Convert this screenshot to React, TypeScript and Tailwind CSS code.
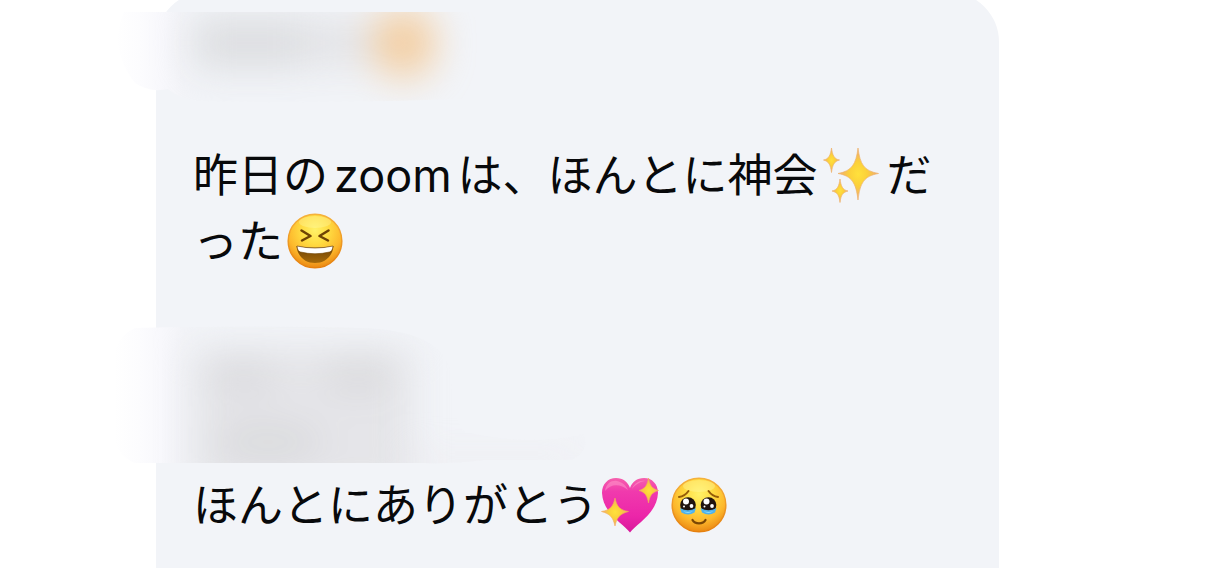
import React from "react";

const emojiClass = "inline-block size-14 align-[-11px]";

function FaceBase({ id }: { id: string }) {
  return (
    <>
      <defs>
        <radialGradient id={id} cx="0.5" cy="0.3" r="0.72">
          <stop offset="0" stopColor="#fff168" />
          <stop offset="0.35" stopColor="#ffdc42" />
          <stop offset="0.7" stopColor="#fdb82c" />
          <stop offset="1" stopColor="#e98410" />
        </radialGradient>
        <linearGradient id={id + "-rim"} x1="0" y1="0" x2="0" y2="1">
          <stop offset="0" stopColor="#f5b23c" />
          <stop offset="1" stopColor="#e6800e" />
        </linearGradient>
      </defs>
      <circle cx="28" cy="28" r="26.800" fill={"url(#" + id + ")"} stroke={"url(#" + id + "-rim)"} strokeWidth="1.5" />
      <ellipse cx="28" cy="9" rx="16" ry="6" fill="#fffbb0" opacity="0.35" />
    </>
  );
}

function LaughingFace() {
  return (
    <svg viewBox="0 0 56 56" role="img" aria-label="😆" className={emojiClass + " ml-1"}>
      <defs>
        <linearGradient id="laugh-mouth" x1="0" y1="0" x2="0" y2="1">
          <stop offset="0" stopColor="#6d4103" />
          <stop offset="1" stopColor="#a5690a" />
        </linearGradient>
      </defs>
      <FaceBase id="laugh-face" />
      <g fill="none" stroke="#6f4204" strokeWidth="2.5" strokeLinecap="round" strokeLinejoin="round">
        <path d="M14.5 17.5 L23.5 23 L15 27.5" />
        <path d="M41.5 17.5 L32.5 23 L41 27.5" />
      </g>
      <path d="M9.5 33 Q28 36.500 46.500 33 C45.500 43.500 38 50 28 50 C18 50 10.500 43.500 9.500 33Z" fill="url(#laugh-mouth)" />
      <path d="M10 33 Q28 37 46 33 C45.700 36.500 44.500 38.500 42.500 39 Q28 42.500 13.500 39 C11.500 38.500 10.300 36.500 10 33Z" fill="#fff" stroke="#6f4204" strokeWidth="0.6" />
    </svg>
  );
}

function TearfulFace() {
  return (
    <svg viewBox="0 0 56 56" role="img" aria-label="🥹" className={emojiClass + " ml-3"}>
      <FaceBase id="tear-face" />
      <g fill="none" stroke="#965c08" strokeWidth="2" strokeLinecap="round">
        <path d="M8 20 C12 19.500 15 17.500 17.500 14" />
        <path d="M47 20 C43 19.500 40 17.500 37.500 14" />
        <path d="M21.500 43 C24 47.500 32 47.500 34.500 43" stroke="#7b4704" strokeWidth="2.3" />
      </g>
      {[17, 37.5].map((x) => (
        <g key={x}>
          <circle cx={x} cy="28" r="7.800" fill="#21140f" />
          <path d={`M${x - 8} 31 Q${x} 35.500 ${x + 8} 31 L${x + 6.5} 35.500 Q${x} 39.500 ${x - 6.5} 35.500Z`} fill="#4fb2ec" />
          <path d={`M${x - 5} 34 Q${x} 36 ${x + 5} 34 Q${x} 38 ${x - 5} 34Z`} fill="#8adcff" />
          <circle cx={x - 2} cy="24.500" r="3" fill="#fff" />
          <circle cx={x + 3.5} cy="29" r="1.900" fill="#fff" />
          <circle cx={x - 4} cy="29.500" r="1" fill="#fff" />
        </g>
      ))}
    </svg>
  );
}

const starGradient = (id: string) => (
  <radialGradient id={id}>
    <stop offset="0" stopColor="#ffe13c" />
    <stop offset="0.45" stopColor="#fbd03a" />
    <stop offset="1" stopColor="#efa878" />
  </radialGradient>
);

function Sparkles() {
  return (
    <svg viewBox="0 0 56 56" role="img" aria-label="✨" className={emojiClass + " mr-2 ml-[5px]"}>
      <defs>{starGradient("sparkle")}</defs>
      <g fill="url(#sparkle)" stroke="#eeb26c" strokeWidth="0.7" strokeLinejoin="round">
        <path d="M35 1 C37 17 41 24 55.500 26.500 C41 29 37 36 35 53 C33 36 29 29 15 26.500 C29 24 33 17 35 1Z" />
        <path d="M8.500 1 C9.500 8 11 12 16.500 13 C11 14.500 9.500 18 8.500 25.500 C7.500 18 6 14.500 0.500 13 C6 12 7.500 8 8.500 1Z" />
        <path d="M17 32 C18 39 19.500 43 25 44 C19.500 45.500 18 48 17 55.500 C16 48 14.500 45.500 9 44 C14.500 43 16 39 17 32Z" />
      </g>
    </svg>
  );
}

function SparklingHeart() {
  return (
    <svg viewBox="0 0 58 56" role="img" aria-label="💖" className="ml-[3px] inline-block h-14 w-[58px] align-[-11px]">
      <defs>
        <linearGradient id="heart" x1="0" y1="0" x2="0" y2="1">
          <stop offset="0" stopColor="#f660ad" />
          <stop offset="0.25" stopColor="#f03aad" />
          <stop offset="0.7" stopColor="#ec26a9" />
          <stop offset="1" stopColor="#d8189b" />
        </linearGradient>
        {starGradient("heart-star")}
      </defs>
      <path d="M29 55.500 C23 47 2 37 1 16 C1 7 7 1 15 1 C22 1 27 5 29 11 C31 5 36 1 43 1 C51 1 57 7 57 16 C56 37 35 47 29 55.500Z" fill="url(#heart)" />
      <path d="M4 14 C5 6 11 3 16 4 C21 5 25 8 27 13 C20 7 10 6 4 14Z" fill="#ff9dcf" opacity="0.5" />
      <path d="M31 12 C33 6 39 3 44 4 C38 5 34 8 31 12Z" fill="#ff9dcf" opacity="0.5" />
      <g fill="url(#heart-star)" stroke="#f4ac55" strokeWidth="0.6">
        <path d="M14 21 C16 30 19 33 27.500 34.500 C19 37 16 40 14 49 C12 40 9 37 0.500 34.500 C9 33 12 30 14 21Z" />
        <path d="M47.500 1 C49 9 51 11.500 57.500 13.500 C51 15.500 49 18 47.500 26 C46 18 44 15.500 38 13.500 C44 11.500 46 9 47.500 1Z" />
      </g>
    </svg>
  );
}

function EdgeFade({ id }: { id: string }) {
  return (
    <linearGradient id={id} gradientUnits="userSpaceOnUse" x1="14" y1="0" x2="100" y2="0">
      <stop offset="0" stopColor="#ffffff" />
      <stop offset="0.3" stopColor="#fcfcfe" />
      <stop offset="0.55" stopColor="#f8f8fc" />
      <stop offset="0.8" stopColor="#f3f4f8" />
      <stop offset="1" stopColor="#f2f4f8" />
    </linearGradient>
  );
}

function NameSmudge() {
  return (
    <svg aria-hidden="true" viewBox="0 0 400 120" className="absolute -top-2 -left-[93px] h-[120px] w-[400px] max-w-none">
      <defs>
        <EdgeFade id="name-edge" />
        <clipPath id="name-clip">
          <path d="M24 12 H372 Q384 28 377 70 Q374 98 362 99 Q230 104 98 101 Q78 98 68 89 Q50 93 35 83 Q8 48 24 12Z" />
        </clipPath>
        <filter id="name-blur" x="-50%" y="-100%" width="200%" height="300%" colorInterpolationFilters="sRGB">
          <feGaussianBlur stdDeviation="18 20" />
        </filter>
      </defs>
      <g clipPath="url(#name-clip)">
        <rect width="400" height="120" fill="url(#name-edge)" />
        <g filter="url(#name-blur)">
          <rect x="92" y="20" width="180" height="46" fill="#dddee0" opacity="0.75" />
          <rect x="98" y="22" width="105" height="42" fill="#d2d3d5" opacity="0.55" />
          <circle cx="304" cy="43" r="33" fill="#f4c388" opacity="0.8" />
        </g>
      </g>
    </svg>
  );
}

function MessageSmudge() {
  return (
    <svg aria-hidden="true" viewBox="0 0 500 150" className="absolute -top-[18px] -left-[93px] h-[150px] w-[500px] max-w-none">
      <defs>
        <EdgeFade id="message-edge" />
        <clipPath id="message-clip">
          <path d="M35 8 Q170 5 260 8 Q340 10 350 50 Q354 105 365 112 Q430 127 484 114 Q490 130 472 140 H384 Q350 144 325 143 H35 Q14 135 14 110 V40 Q14 18 35 8Z" />
        </clipPath>
        <filter id="message-blur" x="-50%" y="-60%" width="200%" height="220%" colorInterpolationFilters="sRGB">
          <feGaussianBlur stdDeviation="18 18" />
        </filter>
      </defs>
      <g clipPath="url(#message-clip)">
        <rect width="500" height="150" fill="url(#message-edge)" />
        <g filter="url(#message-blur)">
          <rect x="93" y="28" width="219" height="152" fill="#e3e3e6" opacity="0.88" />
          <ellipse cx="143" cy="56" rx="36" ry="18" fill="#d5d5d8" opacity="0.6" />
          <ellipse cx="258" cy="55" rx="36" ry="18" fill="#d3d3d6" opacity="0.6" />
          <ellipse cx="168" cy="122" rx="55" ry="20" fill="#d3d3d6" opacity="0.6" />
          <rect x="310" y="134" width="170" height="16" fill="#ebe7ec" opacity="0.6" />
        </g>
      </g>
    </svg>
  );
}

export default function App() {
  return (
    <main className="flex h-screen flex-col overflow-hidden bg-white pr-[207px] pl-[156px]">
      <article
        lang="ja"
        className="-mt-2 shrink-0 rounded-[50px] bg-[#f2f4f8] px-[37px] pt-4 pb-20 font-['Noto_Sans_CJK_JP',sans-serif] text-[45px] leading-[66px] text-[#08090b]"
      >
        <div className="relative mb-[66px] h-[66px]">
          <NameSmudge />
        </div>
        <p className="mb-[66px]">
          昨日の<span className="mx-1.5 font-['Inter',sans-serif] leading-none">zoom</span>は、ほんとに神会
          <Sparkles />だった
          <LaughingFace />
        </p>
        <div className="relative h-[132px]">
          <MessageSmudge />
        </div>
        <p>
          ほんとにありがとう
          <SparklingHeart />
          <TearfulFace />
        </p>
      </article>
    </main>
  );
}
